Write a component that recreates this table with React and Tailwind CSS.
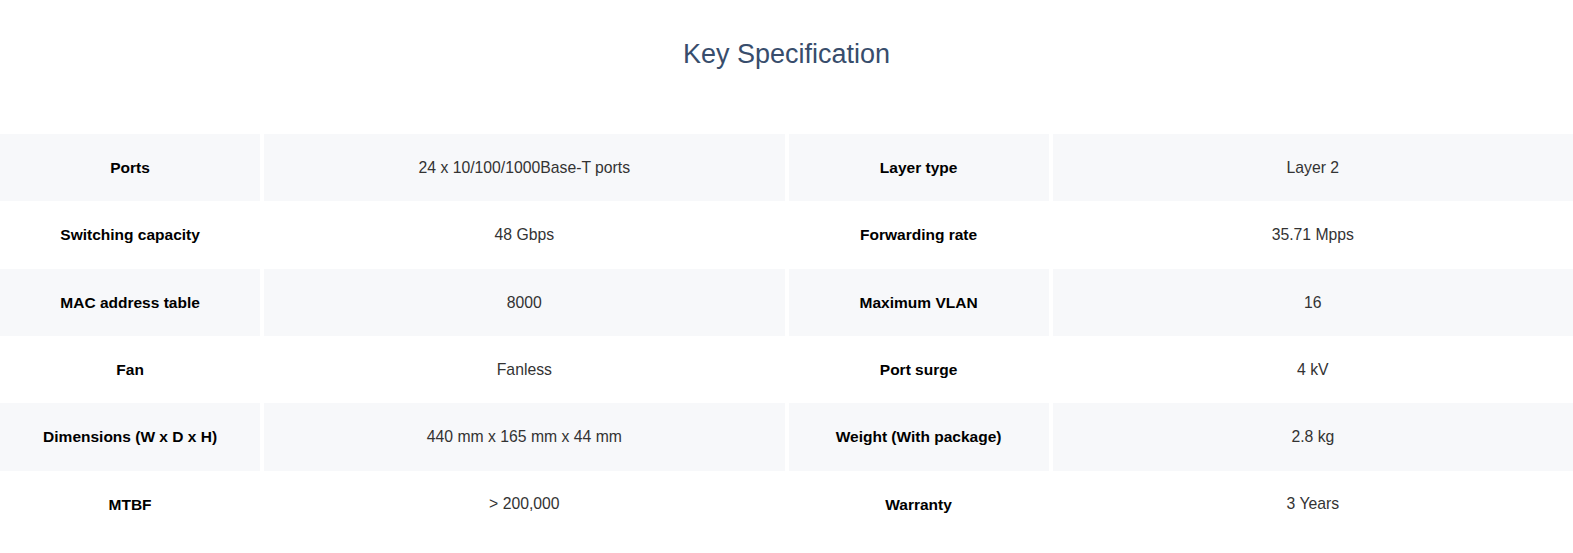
import React from 'react';

const specs = [
  ['Ports', '24 x 10/100/1000Base-T ports', 'Layer type', 'Layer 2'],
  ['Switching capacity', '48 Gbps', 'Forwarding rate', '35.71 Mpps'],
  ['MAC address table', '8000', 'Maximum VLAN', '16'],
  ['Fan', 'Fanless', 'Port surge', '4 kV'],
  ['Dimensions (W x D x H)', '440 mm x 165 mm x 44 mm', 'Weight (With package)', '2.8 kg'],
  ['MTBF', '> 200,000', 'Warranty', '3 Years'],
];

const SpecRow = ({ row, shaded }) => {
  const bg = shaded ? 'bg-[#f7f8fa]' : 'bg-white';
  return (
    <div className="grid grid-cols-[1fr_2fr_1fr_2fr] gap-x-1 h-[67.33px]">
      <div className={`${bg} flex items-center justify-center font-bold text-[15.5px] text-black`}>{row[0]}</div>
      <div className={`${bg} flex items-center justify-center text-[15.75px] text-[#333]`}>{row[1]}</div>
      <div className={`${bg} flex items-center justify-center font-bold text-[15.5px] text-black`}>{row[2]}</div>
      <div className={`${bg} flex items-center justify-center text-[15.75px] text-[#333]`}>{row[3]}</div>
    </div>
  );
};

const App = () => {
  return (
    <div className="w-full min-h-screen bg-white font-['Liberation_Sans',Arial,sans-serif]">
      <h2 className="pt-[39px] text-center text-[27px] leading-[30px] text-[#384d6c]">Key Specification</h2>
      <div className="mt-[65px]">
        {specs.map((row, i) => (
          <SpecRow key={row[0]} row={row} shaded={i % 2 === 0} />
        ))}
      </div>
    </div>
  );
};

export default App;
